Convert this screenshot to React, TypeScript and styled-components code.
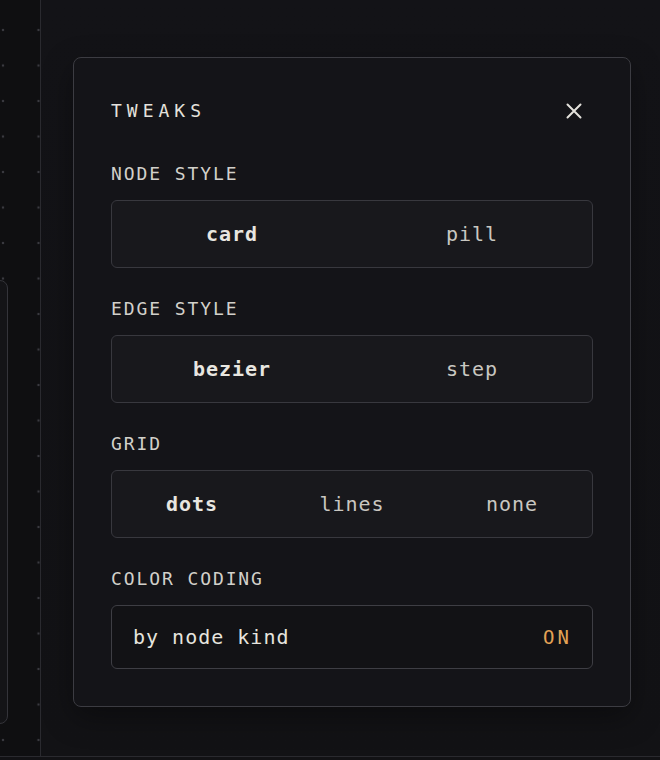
import React, { useState } from 'react';
import styled, { createGlobalStyle } from 'styled-components';

const GlobalStyle = createGlobalStyle`
  html, body, #root {
    margin: 0;
    height: 100%;
  }
  body {
    background: #121215;
    font-family: "DejaVu Sans Mono", "Liberation Mono", monospace;
    overflow: hidden;
  }
`;

const Page = styled.div`
  display: flex;
  height: 756px;
  border-bottom: 1px solid #2a2a2f;
  background: #131316;
`;

const Canvas = styled.div`
  position: relative;
  width: 40px;
  flex: none;
  border-right: 1.5px solid #2a2a2f;
  background-color: #0f0f11;
  background-image: radial-gradient(circle, #3a3a40 1.2px, transparent 1.6px);
  background-size: 35.5px 35.5px;
  background-position: -14.75px 12.25px;
  overflow: hidden;
`;

const CanvasNode = styled.div`
  position: absolute;
  left: -200px;
  top: 280px;
  width: 206px;
  height: 442px;
  border: 1.5px solid #34343a;
  border-radius: 8px;
  background: #141417;
`;

const Main = styled.div`
  flex: 1;
  padding: 57px 0 0 32px;
  background: linear-gradient(180deg, #131317 0%, #121215 100%);
`;

const Panel = styled.div`
  width: 558px;
  box-sizing: border-box;
  padding: 43px 37px 37px;
  border: 1.5px solid #3c3c42;
  border-radius: 8px;
  background: #141418;
  box-shadow: 0 10px 30px rgba(0, 0, 0, 0.35);
  display: flex;
  flex-direction: column;
`;

const Header = styled.div`
  display: flex;
  align-items: center;
  justify-content: space-between;
  height: 20px;
  margin-bottom: 43px;
`;

const Title = styled.h2`
  margin: 0;
  font-size: 18px;
  line-height: 20px;
  font-weight: 500;
  letter-spacing: 5px;
  color: #e4e2dc;
`;

const CloseButton = styled.button`
  display: flex;
  align-items: center;
  justify-content: center;
  width: 20px;
  height: 20px;
  margin-right: 9px;
  padding: 0;
  border: none;
  background: none;
  color: #e4e2dc;
  cursor: pointer;
`;

const Section = styled.section`
  display: flex;
  flex-direction: column;
  gap: 16px;
  & + & {
    margin-top: 31px;
  }
`;

const Label = styled.div`
  font-size: 18px;
  line-height: 20px;
  letter-spacing: 1.9px;
  color: #d2d0ca;
`;

const Segmented = styled.div<{ $count: number }>`
  display: grid;
  grid-template-columns: repeat(${(p) => p.$count}, 1fr);
  height: 68px;
  box-sizing: border-box;
  border: 1.5px solid #38383e;
  border-radius: 6px;
  background: #18181c;
`;

const SegmentButton = styled.button<{ $active: boolean }>`
  border: none;
  background: none;
  padding: 0;
  font-family: inherit;
  font-size: 20px;
  letter-spacing: 1px;
  font-weight: ${(p) => (p.$active ? 700 : 400)};
  color: ${(p) => (p.$active ? '#e8e6e0' : '#c9c7c1')};
  cursor: pointer;
`;

const ToggleRow = styled.button`
  display: flex;
  align-items: center;
  justify-content: space-between;
  height: 64px;
  box-sizing: border-box;
  padding: 0 20px 0 21px;
  border: 1.5px solid #3e3e44;
  border-radius: 6px;
  background: #121215;
  font-family: inherit;
  cursor: pointer;
`;

const ToggleText = styled.span`
  font-size: 20px;
  letter-spacing: 1px;
  color: #e6e4de;
`;

const ToggleState = styled.span<{ $on: boolean }>`
  font-size: 19px;
  font-weight: 500;
  letter-spacing: 3px;
  color: ${(p) => (p.$on ? '#e3a255' : '#77757a')};
`;

type Option = { key: string; label: string };

const sections: { title: string; options: Option[]; initial: string }[] = [
  {
    title: 'NODE STYLE',
    options: [
      { key: 'card', label: 'card' },
      { key: 'pill', label: 'pill' },
    ],
    initial: 'card',
  },
  {
    title: 'EDGE STYLE',
    options: [
      { key: 'bezier', label: 'bezier' },
      { key: 'step', label: 'step' },
    ],
    initial: 'bezier',
  },
  {
    title: 'GRID',
    options: [
      { key: 'dots', label: 'dots' },
      { key: 'lines', label: 'lines' },
      { key: 'none', label: 'none' },
    ],
    initial: 'dots',
  },
];

const SegmentGroup: React.FC<{ options: Option[]; initial: string }> = ({ options, initial }) => {
  const [value, setValue] = useState(initial);
  return (
    <Segmented $count={options.length}>
      {options.map((o) => (
        <SegmentButton key={o.key} $active={o.key === value} onClick={() => setValue(o.key)}>
          {o.label}
        </SegmentButton>
      ))}
    </Segmented>
  );
};

const App: React.FC = () => {
  const [colorCoding, setColorCoding] = useState(true);

  return (
    <>
      <GlobalStyle />
      <Page>
        <Canvas>
          <CanvasNode />
        </Canvas>
        <Main>
          <Panel>
            <Header>
              <Title>TWEAKS</Title>
              <CloseButton aria-label="close">
                <svg width="16" height="16" viewBox="0 0 16 16">
                  <path d="M1.5 1.5 L14.5 14.5 M14.5 1.5 L1.5 14.5" stroke="currentColor" strokeWidth="2" strokeLinecap="round" />
                </svg>
              </CloseButton>
            </Header>
            {sections.map((s) => (
              <Section key={s.title}>
                <Label>{s.title}</Label>
                <SegmentGroup options={s.options} initial={s.initial} />
              </Section>
            ))}
            <Section>
              <Label>COLOR CODING</Label>
              <ToggleRow onClick={() => setColorCoding((v) => !v)}>
                <ToggleText>by node kind</ToggleText>
                <ToggleState $on={colorCoding}>{colorCoding ? 'ON' : 'OFF'}</ToggleState>
              </ToggleRow>
            </Section>
          </Panel>
        </Main>
      </Page>
    </>
  );
};

export default App;
